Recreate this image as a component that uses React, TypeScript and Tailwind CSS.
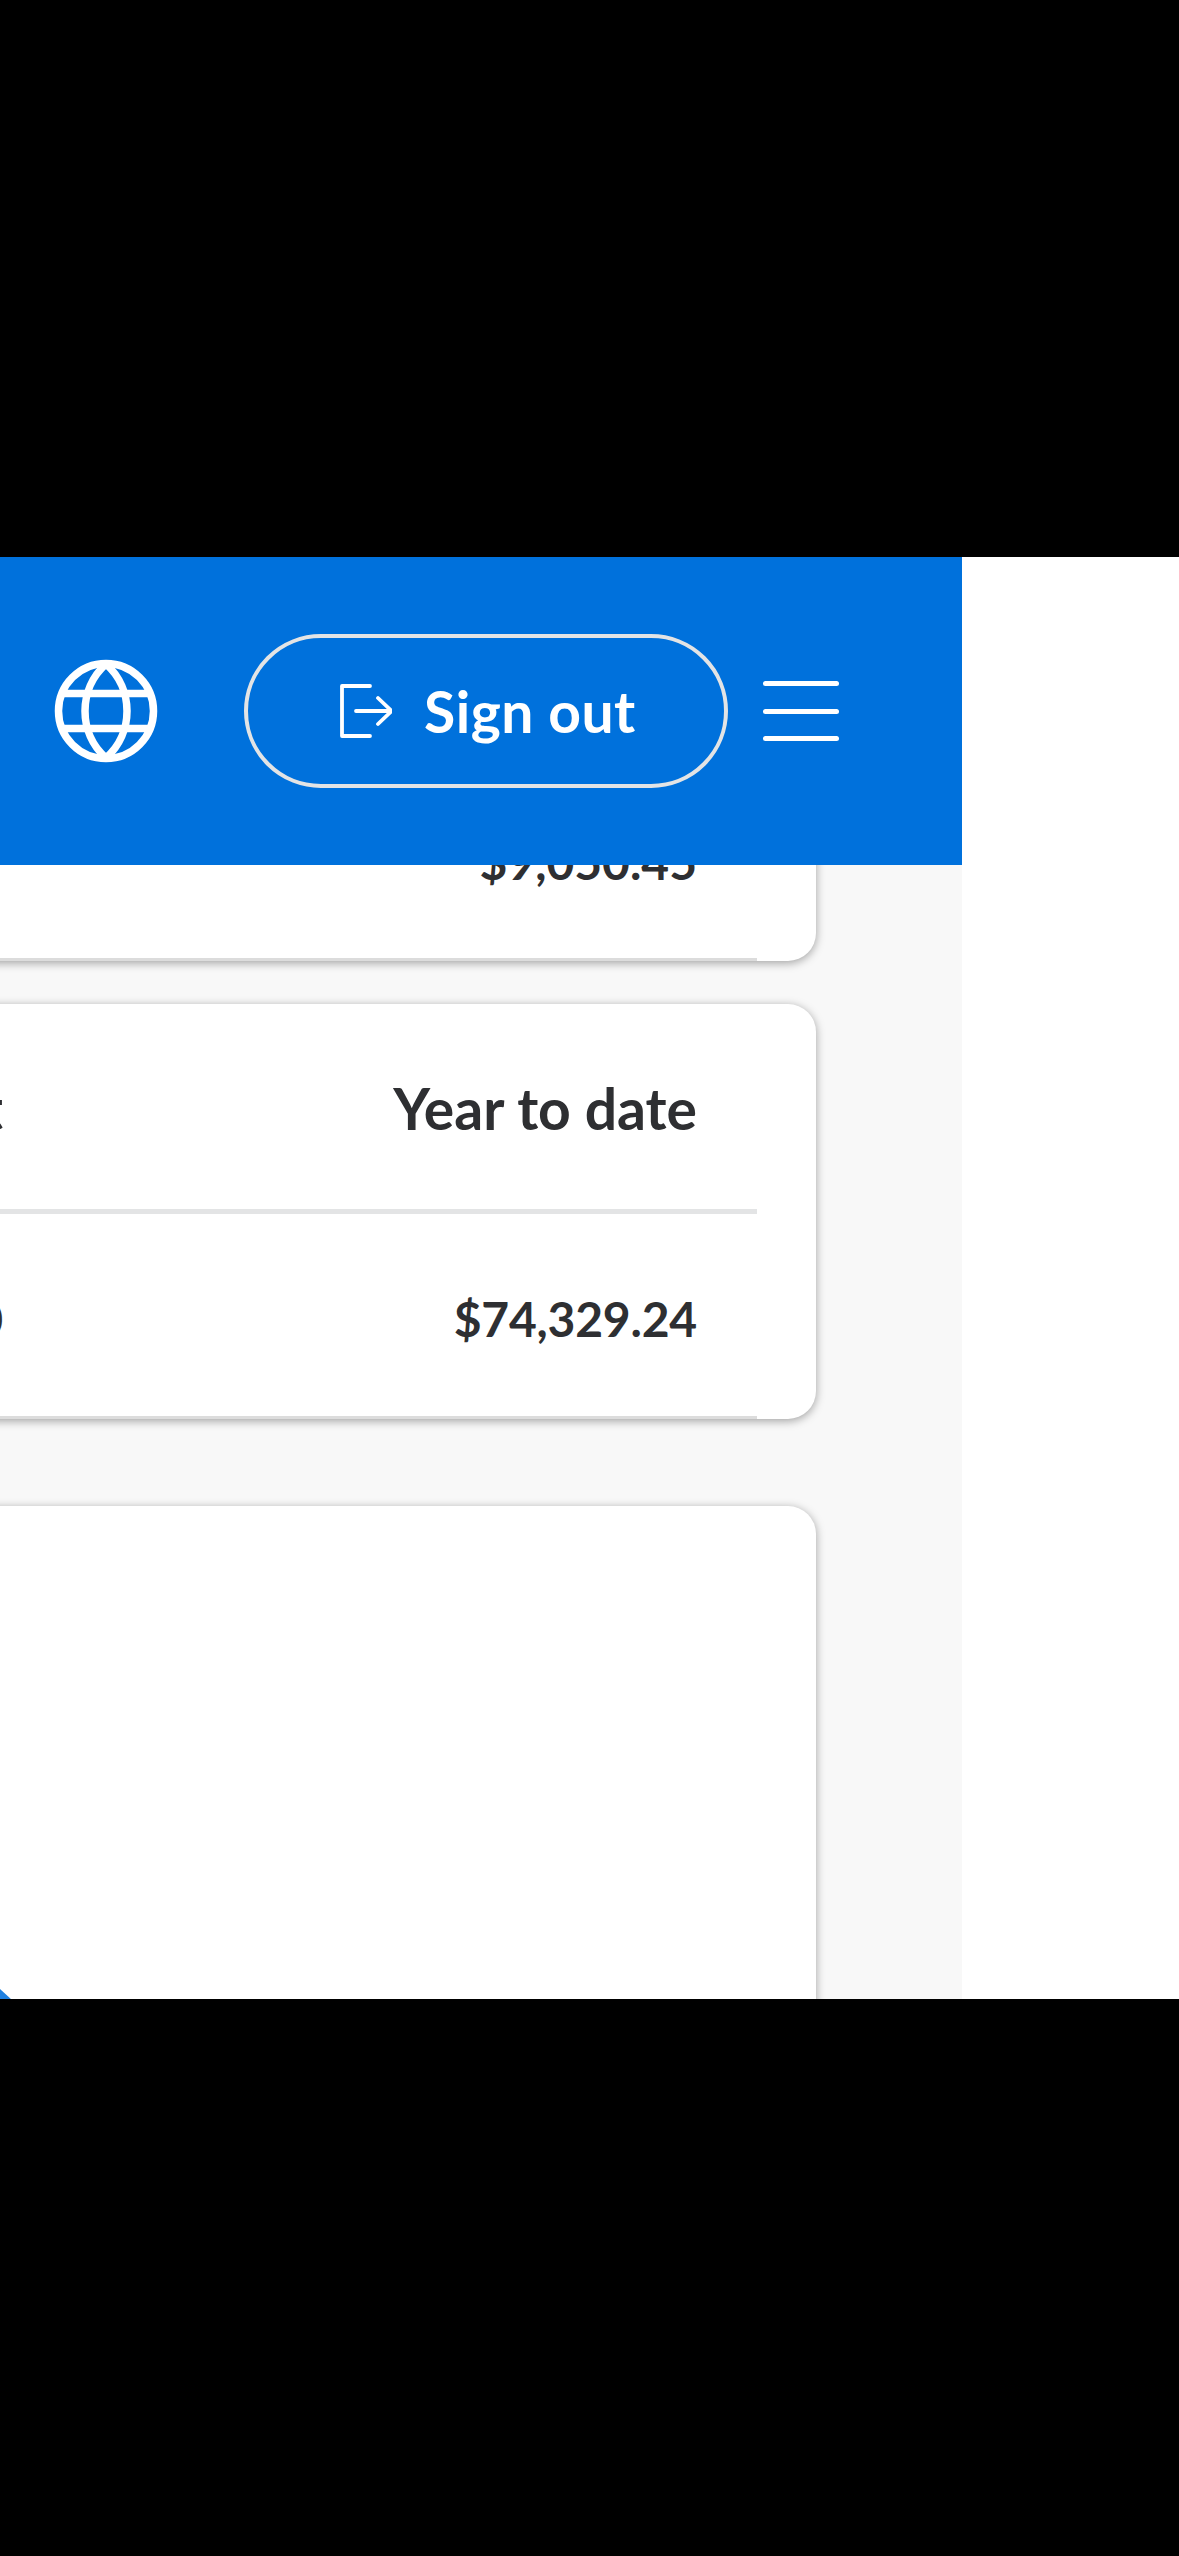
import React from "react";

const font = { fontFamily: '"Lato", "Liberation Sans", sans-serif' };

function Globe() {
  return (
    <svg width="104" height="104" viewBox="0 0 104 104" fill="none" stroke="#fff" strokeWidth="7.5" className="shrink-0">
      <circle cx="52" cy="52" r="47.5" />
      <path d="M52 5C24 30 24 74 52 99C80 74 80 30 52 5Z" strokeLinejoin="round" />
      <path d="M9 34.5h86M9 69.5h86" />
    </svg>
  );
}

function ExitIcon() {
  return (
    <svg width="52" height="54" viewBox="0 0 52 54" fill="none" stroke="#fff" strokeWidth="3.8" strokeLinecap="round" strokeLinejoin="round" className="shrink-0">
      <path d="M30 2H2v50h28" />
      <path d="M16 27h36M38 14l13.5 13L38 40" />
    </svg>
  );
}

function Menu() {
  return (
    <div className="flex w-[76px] flex-col gap-[22.5px]">
      <div className="h-[5px] rounded-full bg-white" />
      <div className="h-[5px] rounded-full bg-white" />
      <div className="h-[5px] rounded-full bg-white" />
    </div>
  );
}

export default function App() {
  return (
    <div className="flex min-h-[2556px] flex-col bg-black pt-[557px]" style={font}>
      <div className="flex h-[1442px] overflow-hidden bg-white">
        <div className="flex h-full w-[962px] flex-col overflow-hidden bg-[#f8f8f8]">
          <header className="relative z-10 flex h-[308px] shrink-0 items-center bg-[#0071dc] pl-[54px]">
            <Globe />
            <div className="ml-[86px] flex h-[154px] w-[484px] items-center rounded-full border-4 border-[#e3e4e5] pl-[92px]">
              <ExitIcon />
              <span className="ml-[32px] text-[57px] font-bold leading-none tracking-[0.5px] text-white">Sign out</span>
            </div>
            <div className="ml-[35px]">
              <Menu />
            </div>
          </header>

          <main className="-mt-[104px] -ml-[300px] flex w-[1116px] flex-col text-[#2e2f32]">
            {/* Card 1 */}
            <section className="h-[200px] rounded-[28px] bg-white shadow-[0_2px_10px_rgba(0,0,0,0.36)]">
              <div className="flex h-full w-[1057px] items-end justify-end border-b-[3px] border-[#dcdcdc] pb-[72px] pr-[60px]">
                <span className="text-[48px] font-bold leading-none">$9,050.45</span>
              </div>
            </section>

            {/* Card 2 */}
            <section className="mt-[43px] h-[415px] rounded-[28px] bg-white shadow-[0_2px_10px_rgba(0,0,0,0.36)]">
              <div className="flex h-full w-[1057px] flex-col border-b-[3px] border-[#dcdcdc]">
                <div className="flex h-[205px] items-center justify-between pr-[60px] pt-[4px]">
                  <span className="w-[303px] text-right text-[57px] font-bold leading-none">Current</span>
                  <span className="text-[57px] font-bold leading-none">Year to date</span>
                </div>
                <div className="h-[5px] bg-[#e3e4e5]" />
                <div className="flex flex-1 items-center justify-between pr-[60px] pt-[7px]">
                  <span className="w-[303px] text-right text-[48px] font-bold leading-none">$2,860.00</span>
                  <span className="text-[48px] font-bold leading-none tracking-[-0.2px]">$74,329.24</span>
                </div>
              </div>
            </section>

            {/* Card 3 */}
            <section className="mt-[87px] h-[600px] rounded-[28px] bg-white pl-[300px] pt-[483px] shadow-[0_2px_10px_rgba(0,0,0,0.36)]">
              <svg width="12" height="12" viewBox="0 0 12 12" className="block">
                <polygon points="0,0 12,11 12,12 0,12" fill="#1f80e0" />
              </svg>
            </section>
          </main>
        </div>
      </div>
    </div>
  );
}
